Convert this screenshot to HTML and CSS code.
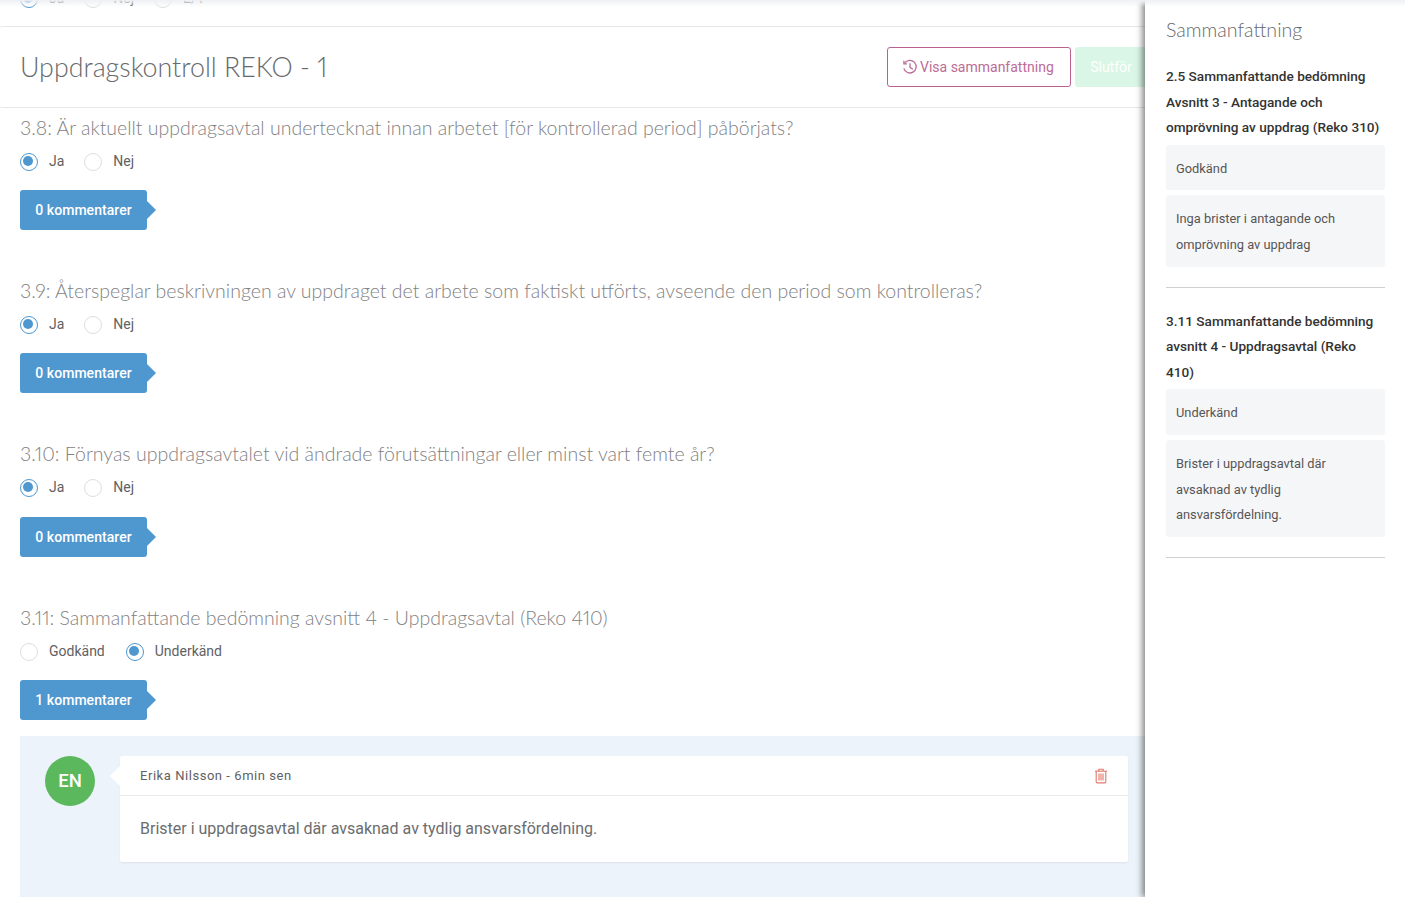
FILE: index.html
```html
<!DOCTYPE html>
<html lang="sv">
<head>
<meta charset="utf-8">
<title>Uppdragskontroll REKO - 1</title>
<link rel="stylesheet" href="styles.css">
</head>
<body>
<div class="page">
  <main class="main">
    <div class="prev">
      <div class="radios prev-radios">
        <label class="radio on">Ja</label>
        <label class="radio">Nej</label>
        <label class="radio">E/T</label>
      </div>
    </div>
    <header class="head">
      <h1 class="title">Uppdragskontroll REKO - 1</h1>
      <div class="actions">
        <button class="btn-outline">
          <svg class="ico-history" viewBox="0 0 16 16" width="16" height="16" fill="none" stroke="currentColor" stroke-width="1.3"><path d="M2.6 4.2A6.3 6.3 0 1 1 1.8 9.4"/><path d="M1.9 1.8v3.1h3.1" stroke-linejoin="miter"/><path d="M8 4.2v4.1l2.9 2"/></svg>
          Visa sammanfattning
        </button>
        <button class="btn-done">Slutför</button>
      </div>
    </header>

    <section class="q">
      <h3 class="q-title">3.8: Är aktuellt uppdragsavtal undertecknat innan arbetet [för kontrollerad period] påbörjats?</h3>
      <div class="radios"><label class="radio on">Ja</label><label class="radio">Nej</label></div>
      <button class="tag">0 kommentarer</button>
    </section>
    <section class="q">
      <h3 class="q-title">3.9: Återspeglar beskrivningen av uppdraget det arbete som faktiskt utförts, avseende den period som kontrolleras?</h3>
      <div class="radios"><label class="radio on">Ja</label><label class="radio">Nej</label></div>
      <button class="tag">0 kommentarer</button>
    </section>
    <section class="q">
      <h3 class="q-title">3.10: Förnyas uppdragsavtalet vid ändrade förutsättningar eller minst vart femte år?</h3>
      <div class="radios"><label class="radio on">Ja</label><label class="radio">Nej</label></div>
      <button class="tag">0 kommentarer</button>
    </section>
    <section class="q last">
      <h3 class="q-title">3.11: Sammanfattande bedömning avsnitt 4 - Uppdragsavtal (Reko 410)</h3>
      <div class="radios radios-wide"><label class="radio">Godkänd</label><label class="radio on">Underkänd</label></div>
      <button class="tag">1 kommentarer</button>
    </section>

    <section class="comments">
      <div class="avatar">EN</div>
      <article class="card">
        <div class="card-head">
          <span class="author">Erika Nilsson - 6min sen</span>
          <svg class="trash" viewBox="0 0 14 16" width="14" height="16" fill="none" stroke="currentColor" stroke-width="1.1"><path d="M1 3.2h12"/><path d="M4.8 3V1.3h4.4V3"/><path d="M2.2 3.2v10.6c0 .7.4 1.1 1 1.1h7.6c.6 0 1-.4 1-1.1V3.2"/><path d="M5 5.5v7M7 5.5v7M9 5.5v7"/></svg>
        </div>
        <div class="card-body">Brister i uppdragsavtal där avsaknad av tydlig ansvarsfördelning.</div>
      </article>
    </section>
  </main>

  <aside class="panel">
    <h2 class="panel-title">Sammanfattning</h2>
    <div class="sum">
      <h4 class="sum-q">2.5 Sammanfattande bedömning Avsnitt 3 - Antagande och omprövning av uppdrag (Reko 310)</h4>
      <div class="sum-box">Godkänd</div>
      <div class="sum-box">Inga brister i antagande och omprövning av uppdrag</div>
    </div>
    <div class="sum">
      <h4 class="sum-q">3.11 Sammanfattande bedömning avsnitt 4 - Uppdragsavtal (Reko 410)</h4>
      <div class="sum-box">Underkänd</div>
      <div class="sum-box">Brister i uppdragsavtal där avsaknad av tydlig ansvarsfördelning.</div>
    </div>
  </aside>
</div>
</body>
</html>
```
FILE: styles.css
```css
* { box-sizing: border-box; }
html, body { margin: 0; height: 100%; overflow: hidden; background: #fff; }
body { font-family: Roboto, "Liberation Sans", sans-serif; font-size: 14px; color: #676a6c; }
.page { position: relative; width: 1405px; height: 897px; overflow: hidden; }
.page::after { content: ""; position: absolute; left: 0; right: 0; top: 0; height: 7px; background: linear-gradient(#eef0f3, rgba(255,255,255,0)); z-index: 5; pointer-events: none; }

.main { width: 1147px; }
.prev { height: 26px; padding-left: 20px; overflow: hidden; }
.head { height: 82px; display: flex; align-items: center; justify-content: space-between; padding-left: 20px; border-top: 1px solid #e7e7e7; border-bottom: 1px solid #e7e7e7; border-radius: 2px; }
.title { margin: 0; font: 300 26.8px/34px Lato, sans-serif; font-variant-numeric: proportional-nums; color: #676a6c; }
.actions { display: flex; gap: 4px; }
.btn-outline { display: flex; align-items: center; gap: 2px; height: 40px; width: 184px; padding: 0 0 0 14px; font: 14px Roboto, sans-serif; color: #bb6c96; background: #fff; border: 1px solid #b9628f; border-radius: 3px; }
.ico-history { flex: none; }
.btn-done { height: 40px; width: 72px; padding: 0; font: 14px Roboto, sans-serif; color: #fff; background: #daf6e6; border: 0; border-radius: 3px; }

.q { padding: 7px 0 0 20px; height: 163.2px; }
.q.last { height: 138.4px; }
.q-title { margin: 0; font: 300 19.5px/26px Lato, sans-serif; font-variant-numeric: proportional-nums; color: #7f8183; white-space: nowrap; }
.radios { display: flex; gap: 20px; height: 20px; margin-top: 10px; }
.radios-wide { gap: 21px; }
.prev .prev-radios { margin-top: -12px; }
.radio { position: relative; padding-left: 29px; font-size: 14px; line-height: 20px; color: #5f6163; }
.radio::before { content: ""; position: absolute; left: 0; top: 2px; width: 16px; height: 16px; border: 1px solid #dcdee0; border-radius: 50%; background: #fff; }
.radio.on::before { border-color: #4f97cf; }
.radio.on::after { content: ""; position: absolute; left: 3px; top: 5px; width: 10px; height: 10px; border-radius: 50%; background: #4f97cf; }
.tag { position: relative; display: block; width: 127px; height: 40px; margin-top: 19.2px; padding: 0; font: 500 14px Roboto, sans-serif; letter-spacing: .05px; color: #fff; background: #4f97cf; border: 0; border-radius: 3px; }
.tag::after { content: ""; position: absolute; right: -9px; top: 11px; width: 0; height: 0; border-style: solid; border-width: 9px 0 9px 9px; border-color: transparent transparent transparent #4f97cf; }

.comments { display: flex; margin-left: 20px; height: 161px; padding: 20px 19px 0 25px; background: #ecf3fa; }
.avatar { flex: none; width: 50px; height: 50px; border-radius: 50%; background: #5cb85c; color: #fff; font-size: 18.5px; font-weight: 500; line-height: 50px; text-align: center; }
.card { position: relative; flex: 1; height: 106px; margin-left: 25px; background: #fff; border-radius: 2px; box-shadow: 0 1px 2px rgba(0,0,0,.07); }
.card::before { content: ""; position: absolute; left: -10px; top: 10px; border-style: solid; border-width: 10px 10px 10px 0; border-color: transparent #fff transparent transparent; }
.card-head { display: flex; align-items: center; justify-content: space-between; height: 40px; padding: 1px 20px 0; border-bottom: 1px solid #e9ebec; }
.author { font-size: 13px; letter-spacing: .55px; color: #5f6163; }
.trash { color: #e2786a; }
.card-body { padding: 23px 20px 0; font-size: 16px; line-height: 20px; color: #6b6d6f; }

.panel { position: absolute; top: 0; left: 1145px; width: 260px; height: 897px; padding: 0 20px 0 21px; background: #fff; box-shadow: -3px 0 6px rgba(0,0,0,.45); z-index: 4; }
.panel-title { margin: 16px 0 21px; font: 300 19.6px/27px Lato, sans-serif; color: #676a6c; }
.sum { padding-bottom: 20px; margin-bottom: 21px; border-bottom: 1px solid #cfd0d1; }
.sum-q { margin: 0 0 4px; font-size: 13.6px; font-weight: 500; line-height: 25.6px; color: #333; }
.sum-box { padding: 11px 10px 9px; margin-top: 5px; font-size: 12.85px; line-height: 25.6px; color: #555; background: #f5f6f8; border-radius: 3px; }
.sum-q + .sum-box { margin-top: 0; }
```
